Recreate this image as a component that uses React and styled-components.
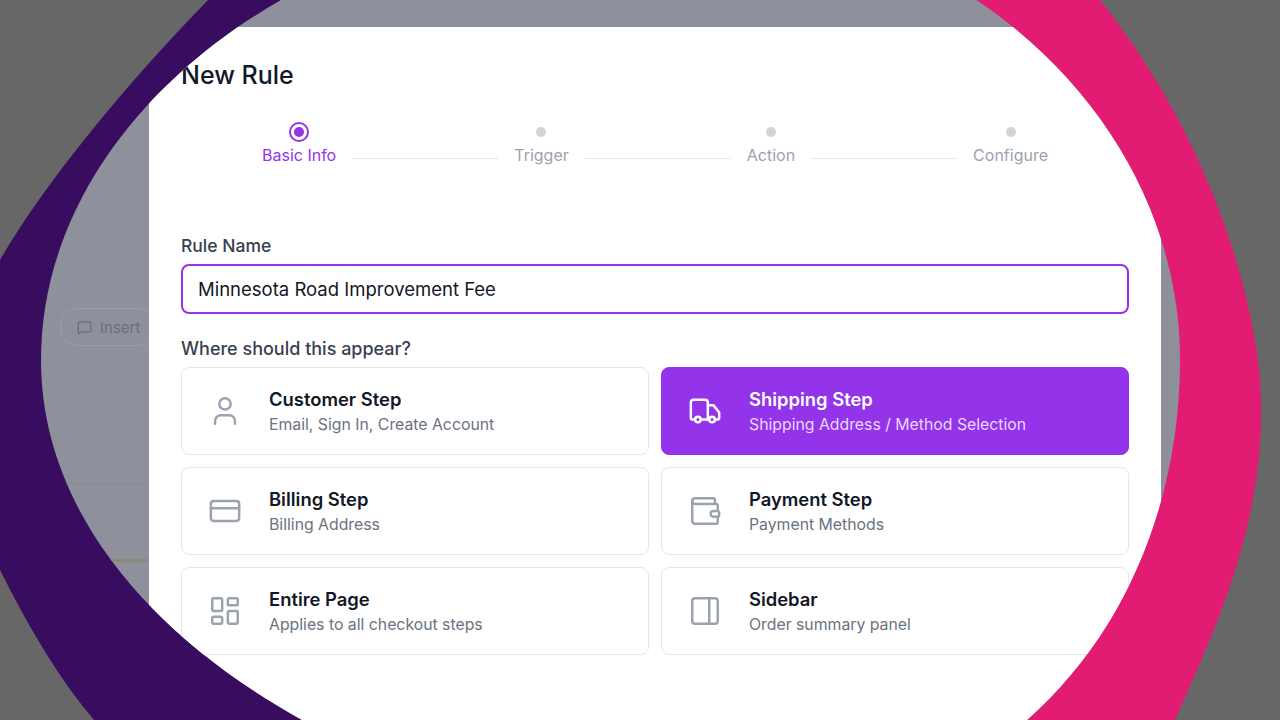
import React from "react";
import styled, { createGlobalStyle } from "styled-components";
import { User, Truck, CreditCard, Wallet, LayoutDashboard, PanelRight, MessageSquare } from "lucide-react";

const Global = createGlobalStyle`
  html, body { margin: 0; padding: 0; }
  body { width: 1280px; height: 720px; overflow: hidden; background: #676767; font-family: Inter, "Noto Sans", sans-serif; }
`;

const Stage = styled.div`
  position: relative;
  width: 1280px;
  height: 720px;
  overflow: hidden;
  background: #676767;
`;

const Blobs = styled.svg`
  position: absolute;
  inset: 0;
`;

const Lens = styled.div`
  position: absolute;
  inset: 0;
  clip-path: path("M41 360 C41 110 320 -95 650 -95 C960 -95 1180 120 1180 360 C1180 610 1010 830 720 830 C420 830 41 640 41 360 Z");
  background: #8e919b;
`;

const BackApp = styled.div`
  height: 100%;
  display: flex;
  flex-direction: column;
`;

const BackTop = styled.div`
  height: 484px;
  border-bottom: 1px solid #868993;
  display: flex;
  align-items: flex-start;
  padding: 308px 0 0 60px;
  box-sizing: border-box;
`;

const Pill = styled.div`
  display: flex;
  align-items: center;
  gap: 8px;
  height: 36px;
  padding: 0 16px;
  border: 1px solid #9a9da6;
  border-radius: 18px;
  color: #6b6e78;
  font-size: 15px;
`;

const BackStripe = styled.div`
  margin-top: 75px;
  margin-left: 100px;
  width: 60px;
  height: 3px;
  background: #8d8a78;
`;

const Modal = styled.div`
  position: absolute;
  left: 149px;
  top: 27px;
  width: 1012px;
  height: 720px;
  background: #fff;
  padding: 34px 32px 0;
  box-sizing: border-box;
  display: flex;
  flex-direction: column;
`;

const Title = styled.h1`
  margin: 0;
  font-size: 25px;
  font-weight: 500;
  color: #111827;
  line-height: 28px;
`;

const Stepper = styled.div`
  display: flex;
  align-items: flex-end;
  gap: 16px;
  margin: 33px 81px 0;
`;

const Step = styled.div`
  display: flex;
  flex-direction: column;
  align-items: center;
  gap: 3px;
  font-size: 16px;
  color: ${p => (p.$active ? "#9333ea" : "#9ca3af")};
`;

const DotWrap = styled.div`
  height: 20px;
  display: flex;
  align-items: center;
  justify-content: center;
`;

const Dot = styled.div`
  width: 10px;
  height: 10px;
  border-radius: 50%;
  background: #d1d5db;
`;

const ActiveDot = styled.div`
  width: 16px;
  height: 16px;
  border-radius: 50%;
  border: 2px solid #9333ea;
  display: flex;
  align-items: center;
  justify-content: center;
  &::after { content: ""; width: 10px; height: 10px; border-radius: 50%; background: #9333ea; }
`;

const Line = styled.div`
  flex: 1;
  height: 1px;
  background: #e5e7eb;
  margin-bottom: 6px;
`;

const Label = styled.div`
  margin-top: 70px;
  font-size: 17.5px;
  color: #374151;
  font-weight: 500;
`;

const Input = styled.div`
  margin-top: 8px;
  height: 50px;
  box-sizing: border-box;
  border: 2px solid #9333ea;
  border-radius: 8px;
  display: flex;
  align-items: center;
  padding: 0 15px;
  font-size: 18.5px;
  color: #111827;
`;

const SubLabel = styled(Label)`
  margin-top: 24px;
  font-size: 18px;
`;

const Grid = styled.div`
  margin-top: 8px;
  display: grid;
  grid-template-columns: 1fr 1fr;
  grid-auto-rows: 88px;
  gap: 12px;
`;

const Card = styled.div`
  border: 1px solid ${p => (p.$sel ? "#9333ea" : "#e5e7eb")};
  background: ${p => (p.$sel ? "#9333ea" : "#fff")};
  border-radius: 8px;
  display: flex;
  align-items: center;
  gap: 27px;
  padding: 0 26px;
  color: ${p => (p.$sel ? "#fff" : "#9ca3af")};
`;

const Texts = styled.div`
  display: flex;
  flex-direction: column;
  gap: 5px;
`;

const CardTitle = styled.div`
  font-size: 18.4px;
  font-weight: 600;
  color: ${p => (p.$sel ? "#fff" : "#111827")};
`;

const CardSub = styled.div`
  font-size: 15.8px;
  color: ${p => (p.$sel ? "#ead7fd" : "#6b7280")};
`;

const steps = ["Basic Info", "Trigger", "Action", "Configure"];
const cards = [
  { icon: User, t: "Customer Step", s: "Email, Sign In, Create Account" },
  { icon: Truck, t: "Shipping Step", s: "Shipping Address / Method Selection", sel: true },
  { icon: CreditCard, t: "Billing Step", s: "Billing Address" },
  { icon: Wallet, t: "Payment Step", s: "Payment Methods" },
  { icon: LayoutDashboard, t: "Entire Page", s: "Applies to all checkout steps" },
  { icon: PanelRight, t: "Sidebar", s: "Order summary panel" },
];

export default function App() {
  return (
    <Stage>
      <Global />
      <Blobs width="1280" height="720" viewBox="0 0 1280 720">
        <path d="M208 0 C120 90 40 190 0 260 L0 570 C30 630 60 680 94 720 L600 720 L600 0 Z" fill="#380d5f" />
        <path d="M1100 0 C1180 100 1240 230 1258 360 C1275 500 1220 620 1175 720 L700 720 L700 0 Z" fill="#e11c72" />
      </Blobs>
      <Lens>
        <BackApp>
          <BackTop>
            <Pill><MessageSquare size={15} />Insert</Pill>
          </BackTop>
          <BackStripe />
        </BackApp>
        <Modal>
          <Title>New Rule</Title>
          <Stepper>
            {steps.map((s, i) => (
              <React.Fragment key={s}>
                {i > 0 && <Line />}
                <Step $active={i === 0}>
                  <DotWrap>{i === 0 ? <ActiveDot /> : <Dot />}</DotWrap>
                  {s}
                </Step>
              </React.Fragment>
            ))}
          </Stepper>
          <Label>Rule Name</Label>
          <Input>Minnesota Road Improvement Fee</Input>
          <SubLabel>Where should this appear?</SubLabel>
          <Grid>
            {cards.map(c => {
              const I = c.icon;
              return (
                <Card key={c.t} $sel={c.sel}>
                  <I size={34} strokeWidth={1.75} />
                  <Texts>
                    <CardTitle $sel={c.sel}>{c.t}</CardTitle>
                    <CardSub $sel={c.sel}>{c.s}</CardSub>
                  </Texts>
                </Card>
              );
            })}
          </Grid>
        </Modal>
      </Lens>
    </Stage>
  );
}
